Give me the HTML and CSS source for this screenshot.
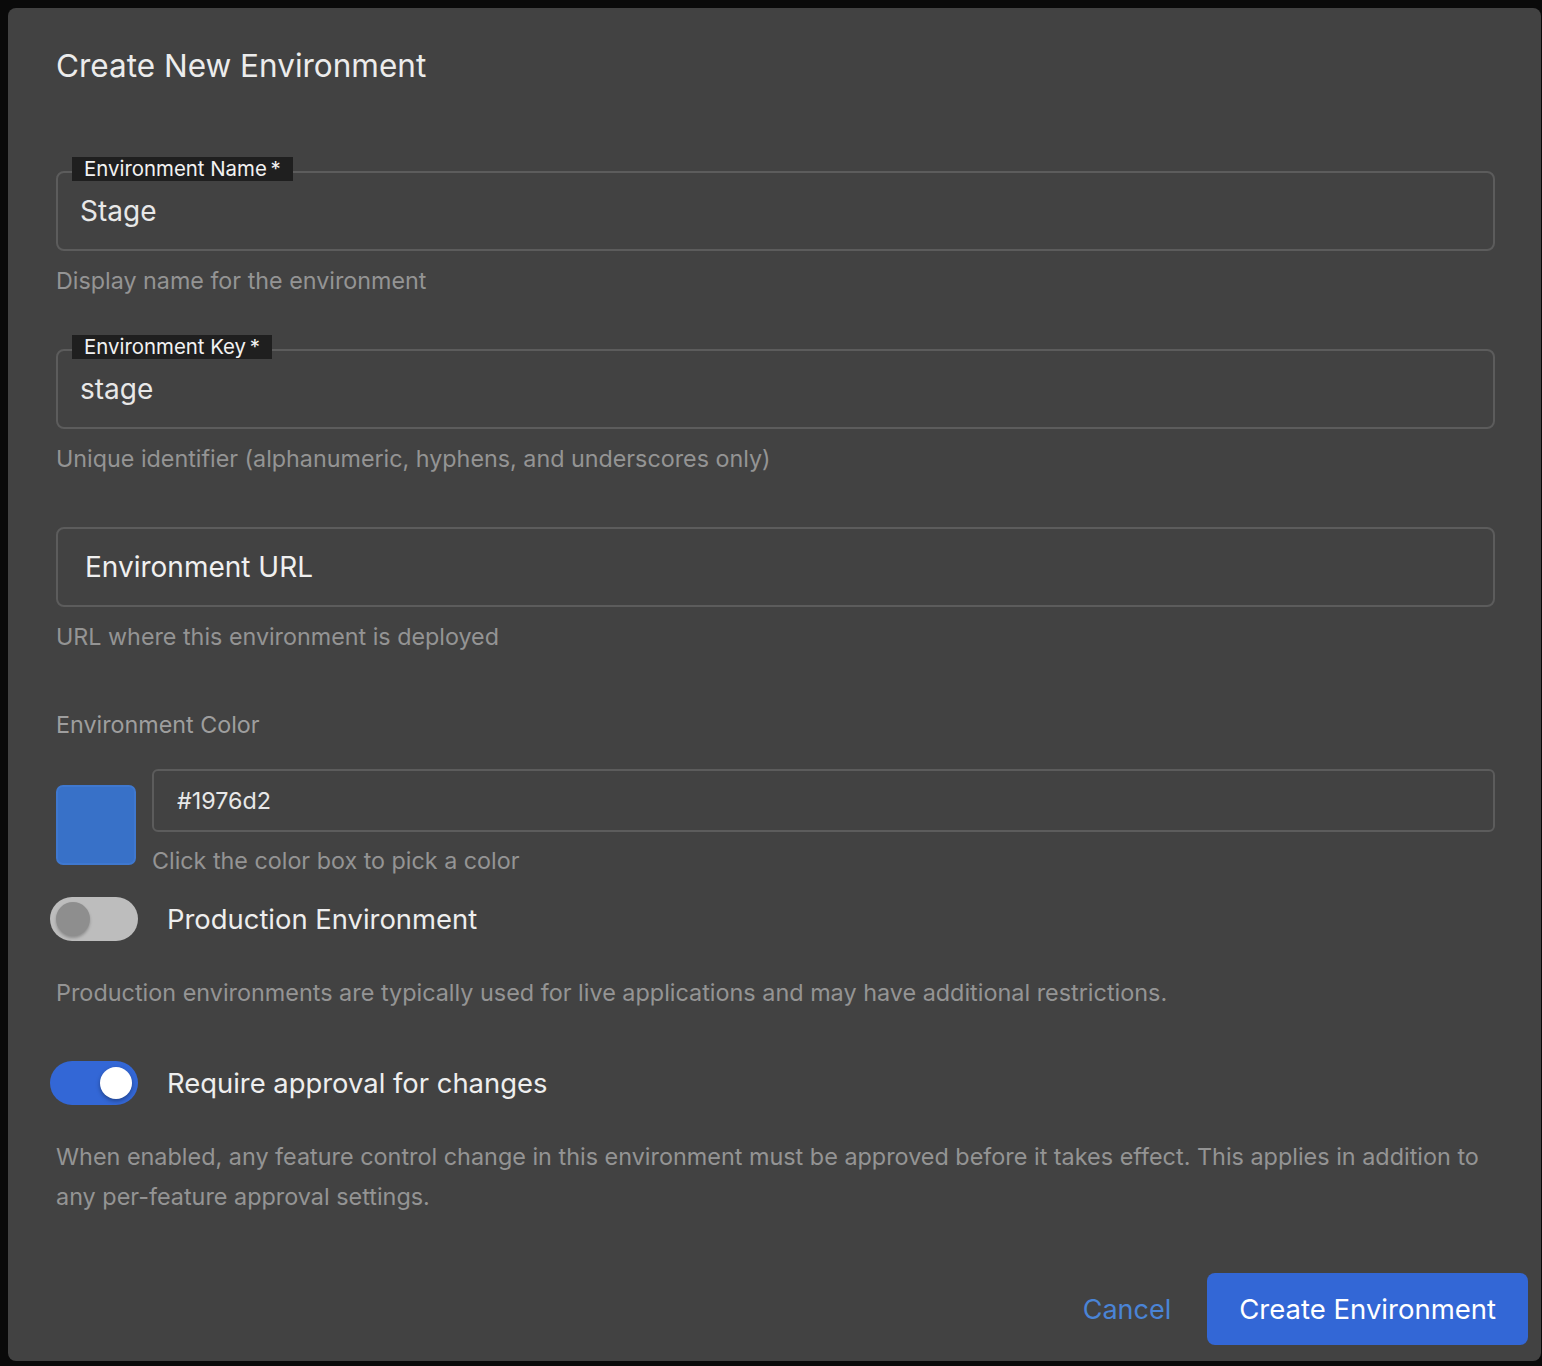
FILE: index.html
```html
<!DOCTYPE html>
<html lang="en">
<head>
  <meta charset="UTF-8">
  <meta name="viewport" content="width=device-width, initial-scale=1.0">
  <title>Create New Environment</title>
  <link rel="stylesheet" href="styles.css">
</head>
<body>
  <div class="backdrop">
    <div class="dialog">
      <h2 class="dialog-title">Create New Environment</h2>

      <div class="field">
        <div class="outlined">
          <span class="float-label">Environment Name&thinsp;*</span>
          <input type="text" value="Stage">
        </div>
        <p class="helper">Display name for the environment</p>
      </div>

      <div class="field">
        <div class="outlined">
          <span class="float-label">Environment Key&thinsp;*</span>
          <input type="text" value="stage">
        </div>
        <p class="helper">Unique identifier (alphanumeric, hyphens, and underscores only)</p>
      </div>

      <div class="field">
        <div class="outlined">
          <input type="text" class="placeholder-label" placeholder="Environment URL">
        </div>
        <p class="helper">URL where this environment is deployed</p>
      </div>

      <div class="color-section">
        <p class="section-label">Environment Color</p>
        <div class="color-row">
          <div class="swatch"></div>
          <div class="color-input">
            <div class="outlined small">
              <input type="text" value="#1976d2">
            </div>
            <p class="helper">Click the color box to pick a color</p>
          </div>
        </div>
      </div>

      <label class="toggle-row">
        <span class="switch"><span class="thumb"></span></span>
        <span class="toggle-label">Production Environment</span>
      </label>
      <p class="desc">Production environments are typically used for live applications and may have additional restrictions.</p>

      <label class="toggle-row second">
        <span class="switch on"><span class="thumb"></span></span>
        <span class="toggle-label">Require approval for changes</span>
      </label>
      <p class="desc">When enabled, any feature control change in this environment must be approved before it takes effect. This applies in addition to any per-feature approval settings.</p>

      <div class="actions">
        <button class="btn-text">Cancel</button>
        <button class="btn-primary">Create Environment</button>
      </div>
    </div>
  </div>
</body>
</html>
```

FILE: styles.css
```css
* {
  box-sizing: border-box;
}
body {
  margin: 0;
  background-color: #0a0a0a;
  font-family: Inter, "Open Sans", Arial, sans-serif;
  color: #ececec;
}
.backdrop {
  padding: 8px 1px 5px 8px;
}
.dialog {
  background-color: #424242;
  border-radius: 8px;
  height: 1353px;
  padding: 38px 46px 0 48px;
  display: flex;
  flex-direction: column;
}
.dialog-title {
  margin: 0;
  font-size: 31.5px;
  font-weight: 400;
  line-height: 40px;
  color: #ececec;
}
.field {
  margin-top: 85px;
}
.field + .field {
  margin-top: 52px;
}
.outlined {
  position: relative;
  border: 2px solid #5c5c5c;
  border-radius: 8px;
  height: 80px;
  display: flex;
  align-items: center;
}
.outlined input {
  width: 100%;
  background: none;
  border: none;
  outline: none;
  font-family: inherit;
  font-size: 28px;
  color: #e8e8e8;
  padding: 0 22px;
}
.outlined input.placeholder-label {
  padding-left: 27px;
}
.outlined input::placeholder {
  color: #f0f0f0;
  opacity: 1;
}
.float-label {
  position: absolute;
  top: -16px;
  left: 14px;
  background-color: #1f1f1f;
  padding: 0 12px;
  font-size: 20.4px;
  line-height: 24px;
  color: #f2f2f2;
}
.helper {
  margin: 14px 0 0;
  font-size: 23.3px;
  line-height: 32px;
  color: #949494;
}
.color-section {
  margin-top: 56px;
}
.section-label {
  margin: 0;
  font-size: 23.3px;
  line-height: 32px;
  color: #9e9e9e;
}
.color-row {
  display: flex;
  gap: 16px;
  margin-top: 28px;
}
.swatch {
  width: 80px;
  height: 80px;
  margin-top: 16px;
  flex-shrink: 0;
  border-radius: 7px;
  background-color: #3871c8;
  border: 2px solid #3f78cf;
}
.color-input {
  flex: 1;
}
.outlined.small {
  height: 63px;
  border-radius: 6px;
}
.outlined.small input {
  font-size: 23.3px;
  padding: 0 23px;
}
.color-input .helper {
  margin-top: 13px;
}
.toggle-row {
  display: flex;
  align-items: center;
  gap: 29px;
  margin: 20px 0 0 -6px;
}
.toggle-row.second {
  margin-top: 48px;
}
.switch {
  position: relative;
  width: 88px;
  height: 44px;
  border-radius: 22px;
  background-color: #bdbdbd;
  flex-shrink: 0;
}
.switch .thumb {
  position: absolute;
  top: 5px;
  left: 6px;
  width: 34px;
  height: 34px;
  border-radius: 50%;
  background-color: #8e8e8e;
  box-shadow: 0 2px 3px rgba(0, 0, 0, 0.25);
}
.switch.on {
  background-color: #3367d6;
}
.switch.on .thumb {
  left: 50px;
  top: 6px;
  width: 32px;
  height: 32px;
  background-color: #ffffff;
  box-shadow: 0 2px 4px rgba(0, 0, 0, 0.35);
}
.toggle-label {
  font-size: 27.4px;
  color: #eeeeee;
}
.desc {
  margin: 32px 0 0;
  font-size: 23.4px;
  line-height: 40px;
  color: #949494;
}
.actions {
  margin-top: auto;
  margin-right: -33px;
  margin-bottom: 16px;
  display: flex;
  justify-content: flex-end;
  align-items: center;
  gap: 12px;
}
.btn-text {
  background: none;
  border: none;
  font-family: inherit;
  font-size: 27px;
  color: #4a84d6;
  padding: 16px 24px;
  cursor: pointer;
}
.btn-primary {
  background-color: #3367d6;
  border: none;
  border-radius: 8px;
  font-family: inherit;
  font-size: 27.5px;
  color: #ffffff;
  height: 72px;
  padding: 0 32px;
  cursor: pointer;
}
```
